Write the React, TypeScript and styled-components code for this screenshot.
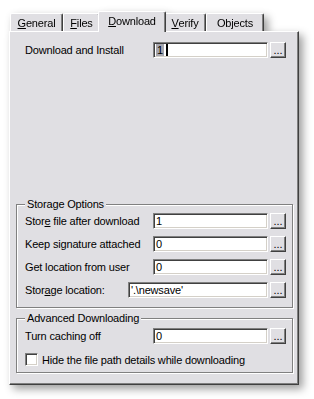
import React from "react";
import styled, { createGlobalStyle } from "styled-components";

const Global = createGlobalStyle`
  html, body { margin: 0; padding: 0; background: #fff; }
  body {
    font-family: "Liberation Sans", Arial, sans-serif;
    font-size: 11px;
    letter-spacing: -0.17px;
    color: #000;
  }
  #root { width: 314px; height: 399px; overflow: hidden; }
`;

const Page = styled.div`
  padding: 11px 0 0 9px;
`;

const Dialog = styled.div`
  width: 290px;
  filter: drop-shadow(4px 4px 4px rgba(0, 0, 0, 0.38));
`;

const TabStrip = styled.div`
  display: flex;
  align-items: flex-end;
  height: 20px;
  padding-left: 1px;
  position: relative;
  z-index: 1;
`;

const Tab = styled.div<{ $w: number; $active?: boolean }>`
  box-sizing: border-box;
  width: ${(p) => p.$w + (p.$active ? 4 : 0)}px;
  height: ${(p) => (p.$active ? 21 : 18)}px;
  margin: 0 ${(p) => (p.$active ? -2 : 0)}px ${(p) => (p.$active ? -1 : 0)}px;
  padding-bottom: ${(p) => (p.$active ? 2 : 0)}px;
  background: #e0dfe3;
  border-top: 1px solid #fff;
  border-left: 1px solid #fff;
  border-right: 1px solid #404040;
  box-shadow: inset -1px 0 #808080;
  border-top-left-radius: 2px;
  border-top-right-radius: 2px;
  display: flex;
  align-items: center;
  justify-content: center;
  white-space: nowrap;
  position: relative;
  z-index: ${(p) => (p.$active ? 2 : 1)};
`;

const Panel = styled.div`
  box-sizing: border-box;
  height: 354px;
  background: #e0dfe3;
  border-top: 1px solid #fff;
  border-left: 1px solid #fff;
  border-right: 1px solid #404040;
  border-bottom: 1px solid #404040;
  box-shadow: inset -1px -1px #808080;
  display: flex;
  flex-direction: column;
  padding: 10px 5px 11px 6px;
`;

const Row = styled.div<{ $inset?: boolean }>`
  display: flex;
  align-items: center;
  height: 16px;
  margin: ${(p) => (p.$inset ? "0 7px 0 9px" : "0")};
`;

const Label = styled.span`
  flex: 1;
  white-space: nowrap;
`;

const Edit = styled.div<{ $w: number }>`
  box-sizing: border-box;
  width: ${(p) => p.$w}px;
  height: 16px;
  background: #fff;
  border-top: 1px solid #808080;
  border-left: 1px solid #808080;
  border-bottom: 1px solid #fff;
  border-right: 1px solid #fff;
  box-shadow: inset 1px 1px #404040, inset -1px -1px #d4d0c8;
  padding: 0 2px 0 2px;
  display: flex;
  align-items: center;
  white-space: nowrap;
  overflow: hidden;
`;

const Selected = styled.span`
  background: #a6a6ae;
  height: 12px;
  line-height: 12px;
  padding: 0 1px;
`;

const Caret = styled.span`
  display: inline-block;
  width: 2px;
  height: 12px;
  background: #000;
  margin-left: 2px;
`;

const Browse = styled.button`
  box-sizing: border-box;
  width: 16px;
  height: 16px;
  margin-left: 2px;
  padding: 0 0 1px 0;
  background: #e0dfe3;
  border-top: 1px solid #fff;
  border-left: 1px solid #fff;
  border-right: 1px solid #404040;
  border-bottom: 1px solid #404040;
  border-radius: 0;
  box-shadow: inset -1px -1px #808080;
  font-family: "Liberation Sans", Arial, sans-serif;
  font-size: 11px;
  line-height: 11px;
  color: #000;
  display: flex;
  align-items: flex-end;
  justify-content: center;
`;

const GroupBox = styled.div<{ $top: number; $pt: number; $pb: number }>`
  position: relative;
  margin-top: ${(p) => (p.$top < 0 ? "auto" : `${p.$top}px`)};
  border: 1px solid #808080;
  box-shadow: 1px 1px #fff, inset 1px 1px #fff;
  padding: ${(p) => p.$pt}px 6px ${(p) => p.$pb}px 8px;
  display: flex;
  flex-direction: column;
  gap: 7px;
`;

const GroupTitle = styled.span`
  position: absolute;
  top: -7px;
  left: 8px;
  padding: 0 2px;
  line-height: 13px;
  background: #e0dfe3;
  white-space: nowrap;
`;

const CheckRow = styled.label`
  display: flex;
  align-items: center;
  height: 13px;
  margin-top: 2px;
  white-space: nowrap;
`;

const CheckBox = styled.span`
  box-sizing: border-box;
  width: 13px;
  height: 13px;
  margin-right: 4px;
  background: #fff;
  border-top: 1px solid #808080;
  border-left: 1px solid #808080;
  border-bottom: 1px solid #fff;
  border-right: 1px solid #fff;
  box-shadow: inset 1px 1px #404040, inset -1px -1px #d4d0c8;
`;

type FieldProps = { label: React.ReactNode; value: string; w?: number };

const Field = ({ label, value, w = 115 }: FieldProps) => (
  <Row>
    <Label>{label}</Label>
    <Edit $w={w}>{value}</Edit>
    <Browse>...</Browse>
  </Row>
);

export default function App() {
  return (
    <>
      <Global />
      <Page>
        <Dialog>
          <TabStrip>
            <Tab $w={53}>
              <u>G</u>eneral
            </Tab>
            <Tab $w={37}>
              <u>F</u>iles
            </Tab>
            <Tab $w={64} $active>
              <u>D</u>ownload
            </Tab>
            <Tab $w={42}>
              <u>V</u>erify
            </Tab>
            <Tab $w={58}>Objects</Tab>
          </TabStrip>
          <Panel>
            <Row $inset>
              <Label>Download and Install</Label>
              <Edit $w={115}>
                <Selected>1</Selected>
                <Caret />
              </Edit>
              <Browse>...</Browse>
            </Row>

            <GroupBox $top={-1} $pt={8} $pb={9}>
              <GroupTitle>Storage Options</GroupTitle>
              <Field
                label={
                  <>
                    Stor<u>e</u> file after download
                  </>
                }
                value="1"
              />
              <Field label="Keep signature attached" value="0" />
              <Field label="Get location from user" value="0" />
              <Field
                label={
                  <>
                    Stor<u>a</u>ge location:
                  </>
                }
                value="'.\newsave'"
                w={140}
              />
            </GroupBox>

            <GroupBox $top={10} $pt={9} $pb={6}>
              <GroupTitle>Advanced Downloading</GroupTitle>
              <Field label="Turn caching off" value="0" />
              <CheckRow>
                <CheckBox />
                Hide the file path details while downloading
              </CheckRow>
            </GroupBox>
          </Panel>
        </Dialog>
      </Page>
    </>
  );
}
